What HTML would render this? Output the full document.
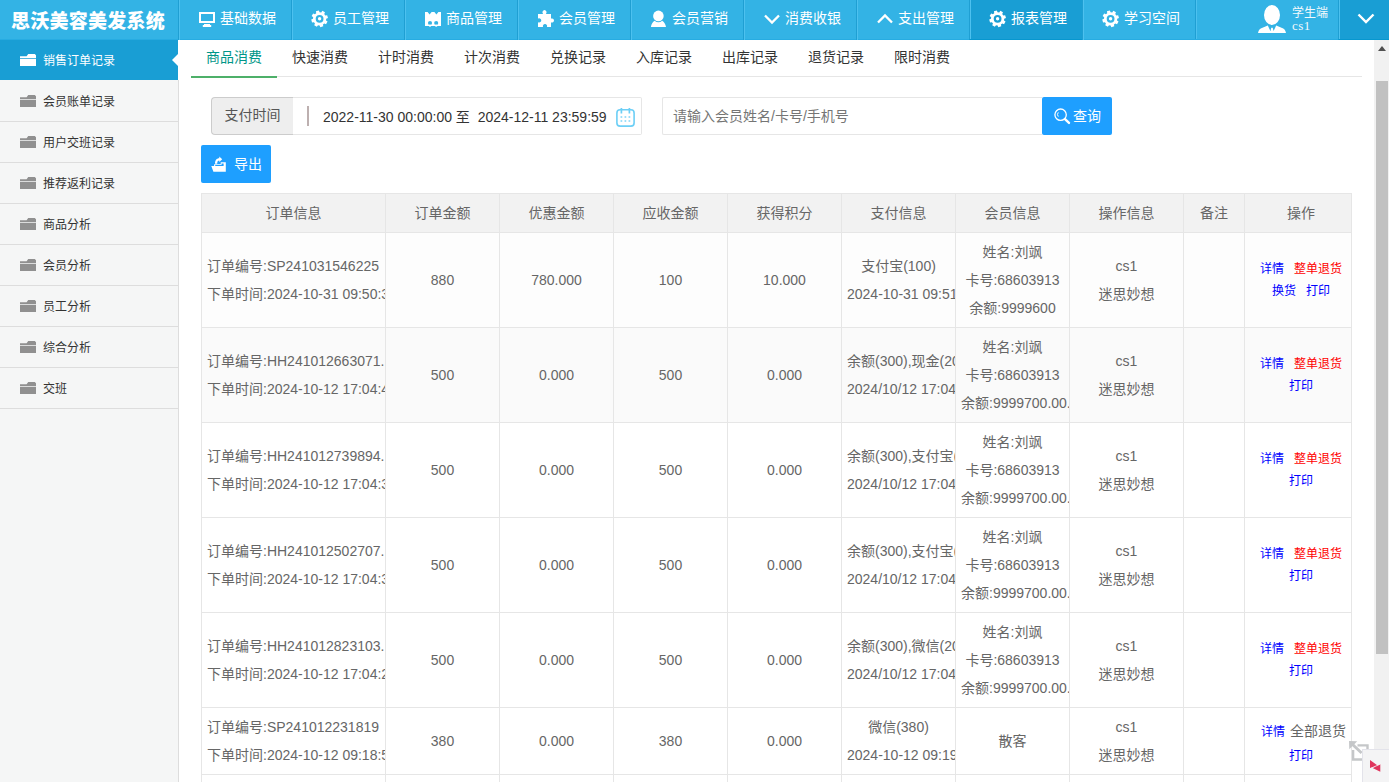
<!DOCTYPE html>
<html>
<head>
<meta charset="utf-8">
<title>思沃美容美发系统</title>
<style>
*{box-sizing:border-box;margin:0;padding:0}
html,body{width:1389px;height:782px;overflow:hidden;background:#fff}
body{position:relative;font-family:"Liberation Sans","Noto Sans CJK SC",sans-serif;font-size:14px;color:#666;-webkit-font-smoothing:antialiased}
a{text-decoration:none}
ul{list-style:none}
/* ---------- header ---------- */
#hd{position:absolute;left:0;top:0;width:1389px;height:40px;background:#33b3e5;border-bottom:1px solid #27ace2;z-index:5}
#logo{position:absolute;left:11px;top:1.500px;width:160px;height:40px;line-height:39px;font-size:19px;font-weight:900;color:#fff;white-space:nowrap;letter-spacing:.25px}
#nav{position:absolute;left:178px;top:0;height:40px;display:flex}
#nav li{position:relative;width:113px;height:40px;border-left:1px solid #1f9fd3;box-shadow:inset 1px 0 0 #4dc1ef;color:#fff;font-size:14px;line-height:36px;white-space:nowrap}
#nav li.on{background:#199ed4;height:40px;border-bottom:1px solid #0797cf}
#nav li svg{position:absolute;left:19px;top:10px;width:18px;height:18px;fill:#fff}
#nav li span{position:absolute;left:41px;top:0}
#navend{position:absolute;left:1195px;top:0;width:1px;height:39px;background:#1f9fd3;box-shadow:1px 0 0 #4dc1ef}
#user{position:absolute;left:1258px;top:0;width:82px;height:40px;color:#f3f9fc}
#user svg{position:absolute;left:0;top:5px;width:28px;height:28px;fill:#fff}
#user b{position:absolute;left:34px;top:4.500px;font-weight:400;font-size:12px;line-height:16px;white-space:nowrap}
#user i{position:absolute;left:34px;top:18px;font-style:normal;font-family:"Liberation Serif",serif;font-size:13px;line-height:16px;letter-spacing:.500px}
#drop{position:absolute;left:1338px;top:0;width:51px;height:40px;background:#199ed4;border-left:1px solid #1f9fd3;border-bottom:1px solid #0797cf;box-shadow:inset 1px 0 0 #4dc1ef}
#drop svg{position:absolute;left:18px;top:12px;width:18px;height:14px}
/* ---------- sidebar ---------- */
#side{position:absolute;left:0;top:40px;width:179px;height:742px;background:#f5f6f6;border-right:1px solid #ddd}
#side li{position:relative;height:41px;border-bottom:1px solid #ddd;font-size:12px;line-height:42px;color:#333;white-space:nowrap}
#side li span{position:absolute;left:43px;top:0}
#side li svg{position:absolute;left:20px;top:14px;width:16px;height:12px;fill:#909090}
#side li.on{background:#199ed4;color:#fff;height:40px;width:179px;border-bottom:0;border-right:1px solid #fff;margin-bottom:1px}
#side li.on svg{fill:#fff}
#side li.on:after{content:"";position:absolute;right:0;top:14px;border:6px solid transparent;border-left:0;border-right:6px solid #fff}
/* ---------- main ---------- */
#main{position:absolute;left:179px;top:40px;width:1195px;height:742px;background:#fff;overflow:hidden}
#tabs{position:absolute;left:12px;top:0;width:1171px;height:37px;border-bottom:1px solid #e6e6e6;display:flex}
#tabs li{position:relative;width:86px;height:37px;text-align:center;line-height:34px;font-size:14px;color:#333}
#tabs li.on{color:#009688}
#tabs li.on:after{content:"";position:absolute;left:0;bottom:-1px;width:86px;height:2px;background:#4eb069}

/* toolbar */
#lab{position:absolute;left:32px;top:57px;width:82px;height:38px;background:#eee;border:1px solid #ccc;border-right:0;border-radius:4px 0 0 4px;text-align:center;line-height:34px;color:#555}
#date{position:absolute;left:114px;top:57px;width:349px;height:38px;border:1px solid #e6e6e6;border-left:0;border-radius:0 2px 2px 0;color:#333;line-height:39px;white-space:nowrap}
#date u{position:absolute;left:14px;top:8px;width:2px;height:20px;background:#bdb0b0}
#date span{position:absolute;left:30px;top:0;word-spacing:0}
#date svg{position:absolute;left:322px;top:9px;width:20px;height:20px}
#kw{position:absolute;left:483px;top:57px;width:380px;height:38px;border:1px solid #e6e6e6;border-right:0;border-radius:2px 0 0 2px;color:#757575;line-height:37px;padding-left:10px;white-space:nowrap}
.btn{position:absolute;width:70px;height:38px;background:#1e9fff;border-radius:2px;color:#fff;line-height:39px;white-space:nowrap}
.btn svg{position:absolute}
.btn span{position:absolute;top:0}
#qry{left:863px;top:57px}
#qry svg{left:11px;top:10px;width:18px;height:18px}
#qry span{left:31px}
#exp{left:22px;top:105px}
#exp svg{left:10px;top:11px;width:16px;height:17px;fill:#fff}
#exp span{left:33px}
/* table */
#tb{position:absolute;left:22px;top:153px;width:1151px;table-layout:fixed;border-collapse:separate;border-spacing:0;border-left:1px solid #e6e6e6;border-top:1px solid #e6e6e6;color:#666;font-size:14px}
#tb th,#tb td{border-right:1px solid #e6e6e6;border-bottom:1px solid #e6e6e6;padding:0;font-weight:400;text-align:center;vertical-align:middle;overflow:hidden}
#tb th{height:39px;background:#f2f2f2;line-height:36px}
#tb th:last-child{padding-left:6px}
#tb td{height:95px;background:#fff}
#tb tr:nth-child(2) td{background:#fdfdfd}
#tb tr:nth-child(3) td{background:#fafafa}
#tb tr.s td{height:67px}
#tb .c{padding:0 5px;line-height:28px;white-space:nowrap;overflow:hidden}
#tb .c div{height:28px}
#tb .l{text-align:left}
#tb .op{font-size:12px;line-height:22px;padding:0 0 0 6px;position:relative;top:0}
#tb .op div{height:22px}
#tb .op a{color:#00f;margin:0 5px}
#tb .op a.r{color:#f00}
#tb .op em{font-style:normal;font-size:14px;color:#666}
/* scrollbar + float */
#sb{position:absolute;left:1374px;top:40px;width:15px;height:742px;background:#f1f1f1}
#sb i{position:absolute;left:2px;top:41px;width:12px;height:573px;background:#c1c1c1}
#sb b{position:absolute;left:4px;top:6px;width:0;height:0;border:4px solid transparent;border-top:0;border-bottom:5px solid #505050}
#rs{position:absolute;left:1348px;top:740px;width:22px;height:22px}
#fl{position:absolute;left:1362px;top:749px;width:27px;height:33px;background:#f4f4f5;border-left:1px solid #e3e3ea;border-top:1px solid #e3e3ea}
#fl svg{position:absolute;left:6.900px;top:10px;width:11px;height:12px}
</style>
</head>
<body>
<div id="hd">
  <div id="logo">思沃美容美发系统</div>
  <ul id="nav">
    <li><svg viewBox="0 0 18 18"><path d="M1 2h16v11H1zM3 4v7h12V4zM6 14h6v1h1.2v2H4.8v-2H6z" fill-rule="evenodd"/></svg><span>基础数据</span></li>
    <li><svg viewBox="0 0 18 18"><path fill-rule="evenodd" d="M10.22 2.40L11.36 0.86L13.98 2.35L13.25 4.12L14.27 5.42L16.16 5.14L16.97 8.05L15.20 8.78L15.00 10.42L16.54 11.56L15.05 14.18L13.28 13.45L11.98 14.47L12.26 16.36L9.35 17.17L8.62 15.40L6.98 15.20L5.84 16.74L3.22 15.25L3.95 13.48L2.93 12.18L1.04 12.46L0.23 9.55L2.00 8.82L2.20 7.18L0.66 6.04L2.15 3.42L3.92 4.15L5.22 3.13L4.94 1.24L7.85 0.43L8.58 2.20zM4.70 8.80 a3.90 3.90 0 1 0 7.80 0a3.90 3.90 0 1 0 -7.80 0zM6.90 8.80 a1.70 1.70 0 1 1 3.40 0a1.70 1.70 0 1 1 -3.40 0z"/></svg><span>员工管理</span></li>
    <li><svg viewBox="0 0 18 18"><path fill-rule="evenodd" d="M1 2h2.600l2 2.400 2-2.400h2.800l2 2.400 2-2.400H17v14H1zM3.95 13.00a2.05 2.05 0 1 0 4.10 0a2.05 2.05 0 1 0 -4.10 0zM10.15 13.00a2.05 2.05 0 1 0 4.10 0a2.05 2.05 0 1 0 -4.10 0z"/><circle cx="6" cy="15.700" r="1.150"/><circle cx="12.200" cy="15.700" r="1.150"/></svg><span>商品管理</span></li>
    <li><svg viewBox="0 0 18 18"><path d="M1 4h4.900v-.600a2 2 0 1 1 3.200 0V4H14v4.600a2.100 2.100 0 1 1 0 3.800V17H9.900a2.100 2.100 0 1 0-3.800 0H1v-4.800a2.100 2.100 0 1 0 0-3.600z"/></svg><span>会员管理</span></li>
    <li><svg viewBox="0 0 18 18"><circle cx="8.400" cy="5.900" r="5.300"/><path d="M.9 17C1.300 14 2.800 11.800 4.600 10.700A6.120 6.120 0 0 0 12.200 10.700C14 11.800 15.600 14 16 17z"/></svg><span>会员营销</span></li>
    <li><svg viewBox="0 0 18 18"><path d="M2 5.500l7 7 7-7" fill="none" stroke="#fff" stroke-width="2.300"/></svg><span>消费收银</span></li>
    <li><svg viewBox="0 0 18 18"><path d="M2 12.500l7-7 7 7" fill="none" stroke="#fff" stroke-width="2.300"/></svg><span>支出管理</span></li>
    <li class="on"><svg viewBox="0 0 18 18"><path fill-rule="evenodd" d="M10.22 2.40L11.36 0.86L13.98 2.35L13.25 4.12L14.27 5.42L16.16 5.14L16.97 8.05L15.20 8.78L15.00 10.42L16.54 11.56L15.05 14.18L13.28 13.45L11.98 14.47L12.26 16.36L9.35 17.17L8.62 15.40L6.98 15.20L5.84 16.74L3.22 15.25L3.95 13.48L2.93 12.18L1.04 12.46L0.23 9.55L2.00 8.82L2.20 7.18L0.66 6.04L2.15 3.42L3.92 4.15L5.22 3.13L4.94 1.24L7.85 0.43L8.58 2.20zM4.70 8.80 a3.90 3.90 0 1 0 7.80 0a3.90 3.90 0 1 0 -7.80 0zM6.90 8.80 a1.70 1.70 0 1 1 3.40 0a1.70 1.70 0 1 1 -3.40 0z"/></svg><span>报表管理</span></li>
    <li><svg viewBox="0 0 18 18"><path fill-rule="evenodd" d="M10.22 2.40L11.36 0.86L13.98 2.35L13.25 4.12L14.27 5.42L16.16 5.14L16.97 8.05L15.20 8.78L15.00 10.42L16.54 11.56L15.05 14.18L13.28 13.45L11.98 14.47L12.26 16.36L9.35 17.17L8.62 15.40L6.98 15.20L5.84 16.74L3.22 15.25L3.95 13.48L2.93 12.18L1.04 12.46L0.23 9.55L2.00 8.82L2.20 7.18L0.66 6.04L2.15 3.42L3.92 4.15L5.22 3.13L4.94 1.24L7.85 0.43L8.58 2.20zM4.70 8.80 a3.90 3.90 0 1 0 7.80 0a3.90 3.90 0 1 0 -7.80 0zM6.90 8.80 a1.70 1.70 0 1 1 3.40 0a1.70 1.70 0 1 1 -3.40 0z"/></svg><span>学习空间</span></li>
  </ul>
  <div id="navend"></div>
  <div id="user">
    <svg viewBox="0 0 28 28"><ellipse cx="14" cy="10" rx="8" ry="10"/><path d="M0 28c.6-3 1.800-4.200 4.500-5.200l5.300-2.300 2.600 5.500.9-3.200h1.400l.9 3.200 2.600-5.500 5.300 2.300c2.700 1 3.900 2.200 4.500 5.200z"/></svg>
    <b>学生端</b><i>cs1</i>
  </div>
  <div id="drop"><svg viewBox="0 0 18 14"><path d="M1.500 2.500l7.500 7.500 7.500-7.500" fill="none" stroke="#fff" stroke-width="2.400"/></svg></div>
</div>

<ul id="side">
  <li class="on"><svg viewBox="0 0 16 12"><path d="M0 2.200h6.600L8.200 0h6.600L16 1.200v3H0zM0 5.100h16V12H0z"/></svg><span>销售订单记录</span></li>
  <li><svg viewBox="0 0 16 12"><path d="M0 2.200h6.600L8.200 0h6.600L16 1.200v3H0zM0 5.100h16V12H0z"/></svg><span>会员账单记录</span></li>
  <li><svg viewBox="0 0 16 12"><path d="M0 2.200h6.600L8.200 0h6.600L16 1.200v3H0zM0 5.100h16V12H0z"/></svg><span>用户交班记录</span></li>
  <li><svg viewBox="0 0 16 12"><path d="M0 2.200h6.600L8.200 0h6.600L16 1.200v3H0zM0 5.100h16V12H0z"/></svg><span>推荐返利记录</span></li>
  <li><svg viewBox="0 0 16 12"><path d="M0 2.200h6.600L8.200 0h6.600L16 1.200v3H0zM0 5.100h16V12H0z"/></svg><span>商品分析</span></li>
  <li><svg viewBox="0 0 16 12"><path d="M0 2.200h6.600L8.200 0h6.600L16 1.200v3H0zM0 5.100h16V12H0z"/></svg><span>会员分析</span></li>
  <li><svg viewBox="0 0 16 12"><path d="M0 2.200h6.600L8.200 0h6.600L16 1.200v3H0zM0 5.100h16V12H0z"/></svg><span>员工分析</span></li>
  <li><svg viewBox="0 0 16 12"><path d="M0 2.200h6.600L8.200 0h6.600L16 1.200v3H0zM0 5.100h16V12H0z"/></svg><span>综合分析</span></li>
  <li><svg viewBox="0 0 16 12"><path d="M0 2.200h6.600L8.200 0h6.600L16 1.200v3H0zM0 5.100h16V12H0z"/></svg><span>交班</span></li>
</ul>

<div id="main">
  <ul id="tabs">
    <li class="on">商品消费</li><li>快速消费</li><li>计时消费</li><li>计次消费</li><li>兑换记录</li><li>入库记录</li><li>出库记录</li><li>退货记录</li><li>限时消费</li>
  </ul>
  <div id="lab">支付时间</div>
  <div id="date"><u></u><span>2022-11-30 00:00:00 至&nbsp; 2024-12-11 23:59:59</span>
    <svg viewBox="0 0 20 20" fill="none" stroke="#6dcff6" stroke-width="1.600"><rect x="1.900" y="2.700" width="17.200" height="16.400" rx="3.200"/><path d="M6.400 1v5.500M14.400 1v5.500" stroke-width="1.700"/><path d="M5.550 10h1.700M9.550 10h1.700M13.550 10h1.700M5.550 14h1.700M9.550 14h1.700M13.550 14h1.700" stroke-width="1.700" stroke="#7dd4f7"/></svg>
  </div>
  <div id="kw">请输入会员姓名/卡号/手机号</div>
  <div id="qry" class="btn"><svg viewBox="0 0 18 18" fill="none" stroke="#fff"><circle cx="7.600" cy="7.700" r="5.700" stroke-width="1.300"/><path d="M12 12.100l4 3.800" stroke-width="2.400" stroke-linecap="round"/><path d="M5.300 5.400a3.300 3.300 0 0 0 0 4.200" stroke-width="1"/></svg><span>查询</span></div>
  <div id="exp" class="btn"><svg viewBox="0 0 16 17"><path fill-rule="evenodd" d="M3.100 8.300H9.700V6.200H14.800V15.800H2.400L.3 10.100H3.100zM4.200 9V9.900H12.600V7.400H10.500V9z"/><path d="M4 7.800C4 4.500 5.500 2.300 8.300 2.300V.6L11.200 3.300 8.300 5.900V4.400C6.800 4.400 6.200 5.500 6.200 7.800z"/></svg><span>导出</span></div>
  <table id="tb">
    <colgroup><col style="width:184px"><col style="width:114px"><col style="width:114px"><col style="width:114px"><col style="width:114px"><col style="width:114px"><col style="width:114px"><col style="width:114px"><col style="width:61px"><col style="width:107px"></colgroup>
    <tr><th>订单信息</th><th>订单金额</th><th>优惠金额</th><th>应收金额</th><th>获得积分</th><th>支付信息</th><th>会员信息</th><th>操作信息</th><th>备注</th><th>操作</th></tr>
    <tr>
      <td><div class="c l"><div>订单编号:SP241031546225</div><div>下单时间:2024-10-31 09:50:39</div></div></td>
      <td><div class="c">880</div></td><td><div class="c">780.000</div></td><td><div class="c">100</div></td><td><div class="c">10.000</div></td>
      <td><div class="c"><div>支付宝(100)</div><div style="text-align:left">2024-10-31 09:51:02</div></div></td>
      <td><div class="c"><div>姓名:刘飒</div><div>卡号:68603913</div><div>余额:9999600</div></div></td>
      <td><div class="c"><div>cs1</div><div>迷思妙想</div></div></td>
      <td><div class="c"></div></td>
      <td><div class="c op"><div><a>详情</a><a class="r">整单退货</a></div><div><a>换货</a><a>打印</a></div></div></td>
    </tr>
    <tr>
      <td><div class="c l"><div>订单编号:HH241012663071...</div><div>下单时间:2024-10-12 17:04:41</div></div></td>
      <td><div class="c">500</div></td><td><div class="c">0.000</div></td><td><div class="c">500</div></td><td><div class="c">0.000</div></td>
      <td><div class="c l"><div>余额(300),现金(200)</div><div>2024/10/12 17:04:41</div></div></td>
      <td><div class="c"><div>姓名:刘飒</div><div>卡号:68603913</div><div>余额:9999700.00...</div></div></td>
      <td><div class="c"><div>cs1</div><div>迷思妙想</div></div></td>
      <td><div class="c"></div></td>
      <td><div class="c op"><div><a>详情</a><a class="r">整单退货</a></div><div><a>打印</a></div></div></td>
    </tr>
    <tr>
      <td><div class="c l"><div>订单编号:HH241012739894...</div><div>下单时间:2024-10-12 17:04:31</div></div></td>
      <td><div class="c">500</div></td><td><div class="c">0.000</div></td><td><div class="c">500</div></td><td><div class="c">0.000</div></td>
      <td><div class="c l"><div>余额(300),支付宝(200)</div><div>2024/10/12 17:04:31</div></div></td>
      <td><div class="c"><div>姓名:刘飒</div><div>卡号:68603913</div><div>余额:9999700.00...</div></div></td>
      <td><div class="c"><div>cs1</div><div>迷思妙想</div></div></td>
      <td><div class="c"></div></td>
      <td><div class="c op"><div><a>详情</a><a class="r">整单退货</a></div><div><a>打印</a></div></div></td>
    </tr>
    <tr>
      <td><div class="c l"><div>订单编号:HH241012502707...</div><div>下单时间:2024-10-12 17:04:31</div></div></td>
      <td><div class="c">500</div></td><td><div class="c">0.000</div></td><td><div class="c">500</div></td><td><div class="c">0.000</div></td>
      <td><div class="c l"><div>余额(300),支付宝(200)</div><div>2024/10/12 17:04:31</div></div></td>
      <td><div class="c"><div>姓名:刘飒</div><div>卡号:68603913</div><div>余额:9999700.00...</div></div></td>
      <td><div class="c"><div>cs1</div><div>迷思妙想</div></div></td>
      <td><div class="c"></div></td>
      <td><div class="c op"><div><a>详情</a><a class="r">整单退货</a></div><div><a>打印</a></div></div></td>
    </tr>
    <tr>
      <td><div class="c l"><div>订单编号:HH241012823103...</div><div>下单时间:2024-10-12 17:04:21</div></div></td>
      <td><div class="c">500</div></td><td><div class="c">0.000</div></td><td><div class="c">500</div></td><td><div class="c">0.000</div></td>
      <td><div class="c l"><div>余额(300),微信(200)</div><div>2024/10/12 17:04:21</div></div></td>
      <td><div class="c"><div>姓名:刘飒</div><div>卡号:68603913</div><div>余额:9999700.00...</div></div></td>
      <td><div class="c"><div>cs1</div><div>迷思妙想</div></div></td>
      <td><div class="c"></div></td>
      <td><div class="c op"><div><a>详情</a><a class="r">整单退货</a></div><div><a>打印</a></div></div></td>
    </tr>
    <tr class="s">
      <td><div class="c l"><div>订单编号:SP241012231819</div><div>下单时间:2024-10-12 09:18:55</div></div></td>
      <td><div class="c">380</div></td><td><div class="c">0.000</div></td><td><div class="c">380</div></td><td><div class="c">0.000</div></td>
      <td><div class="c"><div>微信(380)</div><div style="text-align:left">2024-10-12 09:19:01</div></div></td>
      <td><div class="c"><div>散客</div></div></td>
      <td><div class="c"><div>cs1</div><div>迷思妙想</div></div></td>
      <td><div class="c"></div></td>
      <td><div class="c op"><div style="position:relative;top:1px"><a>详情</a><em>全部退货</em></div><div style="position:relative;top:4px"><a>打印</a></div></div></td>
    </tr>
    <tr class="s"><td></td><td></td><td></td><td></td><td></td><td></td><td></td><td></td><td></td><td></td></tr>
  </table>
</div>

<div id="sb"><b></b><i></i></div>
<svg id="rs" viewBox="0 0 22 22"><path d="M9.500 5.400H19.500V19.500H5.100V10" fill="none" stroke="#c5c7c9" stroke-width="2.400"/><path d="M3 3L13.600 13" fill="none" stroke="#c5c7c9" stroke-width="2.900"/><path d="M1 1l8.200.3L1.300 9.200z" fill="#c5c7c9"/></svg>
<div id="fl"><svg viewBox="0 0 11 12"><path d="M0 0V8.060L7.900 5.700zM10.300 4.200V11.800L2.600 8.060z" fill="#e0345c"/><path d="M.9 8.300L10.100 4.100" stroke="#f4f4f5" stroke-width=".8"/></svg></div>
</body>
</html>
